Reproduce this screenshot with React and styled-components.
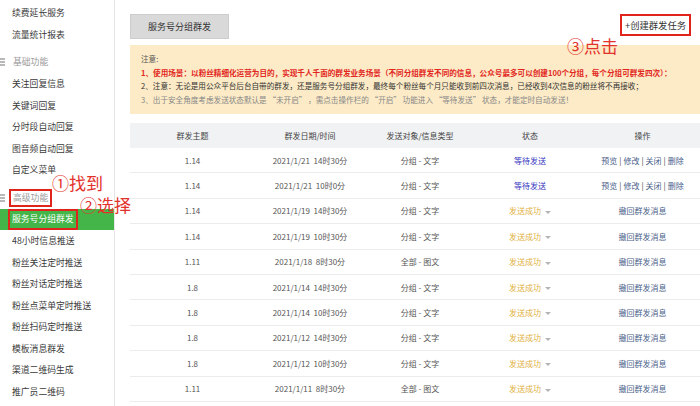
import React from "react";
import styled, { createGlobalStyle } from "styled-components";

const GlobalStyle = createGlobalStyle`
  html, body {
    margin: 0;
    padding: 0;
    background: #fff;
    overflow: hidden;
  }
  body {
    font-family: "Noto Sans CJK SC", "Noto Sans", sans-serif;
    color: #333;
  }
`;

const menu = [
  { type: "item", label: "续费延长服务" },
  { type: "item", label: "流量统计报表" },
  { type: "group", label: "基础功能" },
  { type: "item", label: "关注回复信息" },
  { type: "item", label: "关键词回复" },
  { type: "item", label: "分时段自动回复" },
  { type: "item", label: "图音频自动回复" },
  { type: "item", label: "自定义菜单" },
  { type: "group", label: "高级功能", marked: true },
  { type: "item", label: "服务号分组群发", active: true },
  { type: "item", label: "48小时信息推送" },
  { type: "item", label: "粉丝关注定时推送" },
  { type: "item", label: "粉丝对话定时推送" },
  { type: "item", label: "粉丝点菜单定时推送" },
  { type: "item", label: "粉丝扫码定时推送" },
  { type: "item", label: "模板消息群发" },
  { type: "item", label: "渠道二维码生成" },
  { type: "item", label: "推广员二维码" },
];

const rows = [
  ["1.14", "2021/1/21  14时30分", "分组 - 文字", "wait"],
  ["1.14", "2021/1/21  10时0分", "分组 - 文字", "wait"],
  ["1.14", "2021/1/19  14时30分", "分组 - 文字", "done"],
  ["1.14", "2021/1/19  10时30分", "分组 - 文字", "done"],
  ["1.11", "2021/1/18  8时30分", "全部 - 图文", "done"],
  ["1.8", "2021/1/14  14时30分", "分组 - 文字", "done"],
  ["1.8", "2021/1/14  10时30分", "分组 - 文字", "done"],
  ["1.8", "2021/1/12  14时30分", "分组 - 文字", "done"],
  ["1.8", "2021/1/12  10时30分", "分组 - 文字", "done"],
  ["1.11", "2021/1/11  8时30分", "全部 - 图文", "done"],
];

const Page = styled.div`
  position: relative;
  display: flex;
  width: 700px;
  height: 406px;
  overflow: hidden;
`;

const Sidebar = styled.aside`
  width: 115px;
  flex-shrink: 0;
  box-sizing: border-box;
  border-right: 1px solid #e6e6e6;
  padding-top: 2px;
`;

const NavItem = styled.div`
  height: 21.5px;
  display: flex;
  align-items: center;
  padding-left: 12px;
  font-size: 8.8px;
  color: ${(p) => (p.$active ? "#fff" : "#3a3a3a")};
  background: ${(p) => (p.$active ? "#44b549" : "transparent")};
`;

const GroupTitle = styled.div`
  height: 21.5px;
  margin-top: 6.5px;
  display: flex;
  align-items: center;
  gap: 3px;
  font-size: 8.8px;
  color: #9a9a9a;
`;

const Marked = styled.span`
  display: inline-block;
  box-sizing: border-box;
  border: 2px solid ${(p) => (p.$on ? "#e0231b" : "transparent")};
  padding: 0 2px;
  margin-left: ${(p) => (p.$shift ? "-4px" : "0")};
  height: ${(p) => (p.$tall ? "20.5px" : "18px")};
  line-height: ${(p) => (p.$tall ? "16.5px" : "14px")};
`;

const Main = styled.main`
  flex: 1;
  min-width: 0;
  padding: 14px 0 0 15px;
`;

const TopBar = styled.div`
  display: flex;
  justify-content: space-between;
  align-items: flex-start;
  height: 25px;
  padding-right: 9px;
`;

const Tab = styled.div`
  width: 99px;
  height: 25px;
  box-sizing: border-box;
  background: #d9d9d9;
  border: 1px solid #cdcdcd;
  display: flex;
  align-items: center;
  justify-content: center;
  font-size: 9px;
  color: #333;
`;

const CreateButton = styled.div`
  height: 22px;
  box-sizing: border-box;
  border: 2px solid #e0231b;
  padding: 0 3px;
  display: flex;
  align-items: center;
  font-size: 9.3px;
  color: #333;
  white-space: nowrap;
`;

const Notice = styled.div`
  margin-top: 6px;
  background: #fcebc6;
  padding: 7px 0 8px 11px;
  font-size: 7.6px;
  line-height: 13.5px;
  white-space: nowrap;
  overflow: hidden;
`;

const NoticeLine = styled.div`
  color: ${(p) => p.$color};
  font-weight: ${(p) => (p.$bold ? 700 : 400)};
`;

const Table = styled.div`
  margin-top: 9px;
  width: 570px;
`;

const Row = styled.div`
  display: grid;
  grid-template-columns: 125px 110px 110px 110px 115px;
  height: ${(p) => (p.$head ? "25px" : "25.4px")};
  align-items: center;
  box-sizing: border-box;
  background: ${(p) => (p.$head ? "#f1f2f4" : "#fff")};
  border-bottom: 1px solid ${(p) => (p.$head ? "#f1f2f4" : "#ececec")};
  font-size: 8px;
  color: ${(p) => (p.$head ? "#444" : "#555")};
`;

const Cell = styled.div`
  text-align: center;
  white-space: pre;
`;

const Status = styled.span`
  color: ${(p) => (p.$done ? "#e2b13f" : "#3535c0")};
`;

const Caret = styled.span`
  display: inline-block;
  margin-left: 4px;
  width: 0;
  height: 0;
  border-left: 3px solid transparent;
  border-right: 3px solid transparent;
  border-top: 3px solid #b5b5b5;
  vertical-align: middle;
`;

const Link = styled.span`
  color: #4b6189;
`;

const Sep = styled.span`
  color: #444;
  margin: 0 2px;
`;

const Annotation = styled.div`
  position: absolute;
  left: ${(p) => p.$x}px;
  top: ${(p) => p.$y}px;
  font-size: 17px;
  line-height: 20px;
  color: #e3322b;
  white-space: nowrap;
`;

const GroupIcon = () => (
  <svg width="6" height="8" viewBox="0 0 6 8">
    <rect x="0" y="0" width="5" height="2" fill="#b8b8b8" />
    <rect x="0" y="3" width="5" height="2" fill="#b8b8b8" />
    <rect x="0" y="6" width="5" height="2" fill="#b8b8b8" />
  </svg>
);

const App = () => {
  return (
    <>
      <GlobalStyle />
      <Page>
        <Sidebar>
          {menu.map((m) =>
            m.type === "group" ? (
              <GroupTitle key={m.label}>
                <GroupIcon />
                <Marked $on={m.marked}>{m.label}</Marked>
              </GroupTitle>
            ) : (
              <NavItem key={m.label} $active={m.active}>
                {m.active ? (
                  <Marked $on $shift $tall>
                    {m.label}
                  </Marked>
                ) : (
                  m.label
                )}
              </NavItem>
            )
          )}
        </Sidebar>

        <Main>
          <TopBar>
            <Tab>服务号分组群发</Tab>
            <CreateButton>+创建群发任务</CreateButton>
          </TopBar>

          <Notice>
            <NoticeLine $color="#555">注意:</NoticeLine>
            <NoticeLine $color="#e2271e" $bold>
              1、使用场景：以粉丝精细化运营为目的，实现千人千面的群发业务场景（不同分组群发不同的信息，公众号最多可以创建100个分组，每个分组可群发四次）：
            </NoticeLine>
            <NoticeLine $color="#333">
              2、注意：无论是用公众平台后台自带的群发，还是服务号分组群发，最终每个粉丝每个月只能收到前四次消息，已经收到4次信息的粉丝将不再接收；
            </NoticeLine>
            <NoticeLine $color="#888">
              3、出于安全角度考虑发送状态默认是 “未开启” ，需点击操作栏的 “开启” 功能进入 “等待发送” 状态，才能定时自动发送！
            </NoticeLine>
          </Notice>

          <Table>
            <Row $head>
              <Cell>群发主题</Cell>
              <Cell>群发日期/时间</Cell>
              <Cell>发送对象/信息类型</Cell>
              <Cell>状态</Cell>
              <Cell>操作</Cell>
            </Row>
            {rows.map((r, i) => (
              <Row key={i}>
                <Cell>{r[0]}</Cell>
                <Cell>{r[1]}</Cell>
                <Cell>{r[2]}</Cell>
                <Cell>
                  {r[3] === "wait" ? (
                    <Status>等待发送</Status>
                  ) : (
                    <>
                      <Status $done>发送成功</Status>
                      <Caret />
                    </>
                  )}
                </Cell>
                <Cell>
                  {r[3] === "wait" ? (
                    <>
                      <Link>预览</Link>
                      <Sep>|</Sep>
                      <Link>修改</Link>
                      <Sep>|</Sep>
                      <Link>关闭</Link>
                      <Sep>|</Sep>
                      <Link>删除</Link>
                    </>
                  ) : (
                    <Link>撤回群发消息</Link>
                  )}
                </Cell>
              </Row>
            ))}
          </Table>
        </Main>

        <Annotation $x={52} $y={173}>①找到</Annotation>
        <Annotation $x={80} $y={195}>②选择</Annotation>
        <Annotation $x={567} $y={36}>③点击</Annotation>
      </Page>
    </>
  );
};

export default App;
